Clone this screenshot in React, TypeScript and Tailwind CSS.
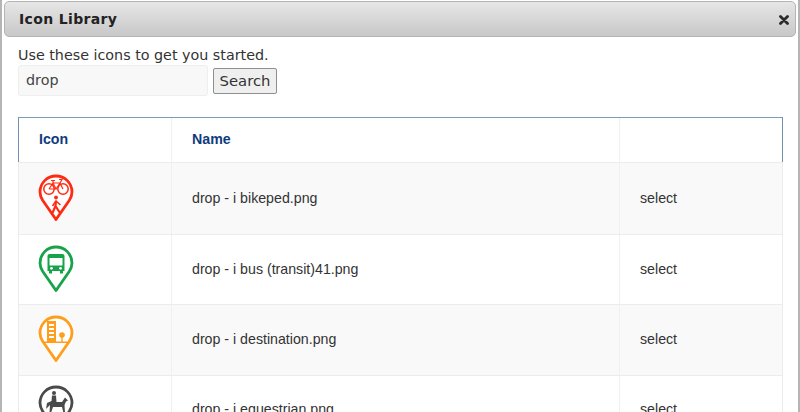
import { ReactNode } from 'react';

function Pin({ color, children }: { color: string; children: ReactNode }) {
  return (
    <svg width="36" height="48" viewBox="0 0 36 48" fill="none" className="block">
      <path
        d="M18 45.5 L4.8 26.5 C3 23.6 2 21 2 18 C2 9 9.2 2 18 2 C26.8 2 34 9 34 18 C34 21 33 23.6 31.2 26.5 Z"
        stroke={color}
        strokeWidth="2.8"
        strokeLinejoin="round"
        fill="#fff"
      />
      {children}
    </svg>
  );
}

const bikeped = (
  <g stroke="#ff2a12" fill="none">
    <circle cx="11" cy="15" r="5.2" strokeWidth="1.5" />
    <circle cx="25" cy="15" r="5.2" strokeWidth="1.5" />
    <path d="M11 15 L15 9 H22 L25 15 M15 9 L18 15 H11 M18 15 L22 9 M13 6.5 H17 M15 6.5 L15 9 M21 5.5 H24 L22 9" strokeWidth="1.2" />
    <circle cx="18" cy="23.5" r="1.9" fill="#ff2a12" stroke="none" />
    <path d="M18 26.5 L17.5 32 L14.5 39 M17.5 32 L22 39" strokeWidth="2.2" />
    <path d="M18 27 L14.5 32 M18 27 L22.5 31" strokeWidth="1.5" />
  </g>
);

const bus = (
  <g fill="#16a34a">
    <path fillRule="evenodd" d="M9.5 11 Q9.5 9 11.5 9 H24.5 Q26.5 9 26.5 11 V26 H25 V28.5 H22 V26 H14 V28.5 H11 V26 H9.5 Z M11.5 13 V20.5 H24.5 V13 Z" />
    <circle cx="13.5" cy="23.3" r="1.4" fill="#fff" />
    <circle cx="22.5" cy="23.3" r="1.4" fill="#fff" />
  </g>
);

const destination = (
  <g fill="#ff9d1c">
    <path fillRule="evenodd" d="M9 6 H18 V27 H9 Z M11 9 V11 H16 V9 Z M11 13 V15 H16 V13 Z M11 17 V19 H16 V17 Z M11 21 V23 H16 V21 Z" />
    <circle cx="24" cy="20" r="2.8" />
    <rect x="23.3" y="21" width="1.4" height="6" />
    <rect x="4" y="26.5" width="28" height="1.5" />
  </g>
);

const equestrian = (
  <g fill="#4a4a4a">
    <circle cx="16" cy="8" r="2" />
    <path d="M14 10.5 H18 L18.5 17 H24 L27 12.5 L30 15.5 L28 16.5 L26.5 20 L27 28 H25.5 L24 22 H15 L13 28 H11.5 L12 20 L8 24 L9 18 L13.5 16 Z" />
  </g>
);

const rows = [
  { name: 'drop - i bikeped.png', color: '#ff2a12', art: bikeped, h: 'h-[72px]', alt: true },
  { name: 'drop - i bus (transit)41.png', color: '#16a34a', art: bus, h: 'h-[70px]', alt: false },
  { name: 'drop - i destination.png', color: '#ff9d1c', art: destination, h: 'h-[71px]', alt: true },
  { name: 'drop - i equestrian.png', color: '#4a4a4a', art: equestrian, h: 'h-[68px]', alt: false },
];

export default function App() {
  return (
    <div className="h-[412px] w-[800px] overflow-hidden bg-white border-l-2 border-r-2 border-[#b5b5b5] font-['DejaVu_Sans',sans-serif] text-[#333]">
      {/* Header */}
      <div className="mx-[2px] mt-px flex h-[36px] items-center justify-between rounded-[5px] border border-[#b4b4b4] bg-gradient-to-b from-[#e6e6e6] to-[#c8c8c8] pl-[14px] pr-[6px]">
        <h1 className="text-[14px] font-bold tracking-[0.35px] text-[#222]">Icon Library</h1>
        <svg width="10" height="10" viewBox="0 0 10 10" className="mt-px">
          <path d="M1.5 1.5 L8.5 8.5 M8.5 1.5 L1.5 8.5" stroke="#2a2a2a" strokeWidth="2.8" strokeLinecap="round" />
        </svg>
      </div>

      {/* Body */}
      <div className="pl-4 pr-[15px]">
        <p className="mt-[8px] h-[20px] text-[14.3px] leading-[20px] text-[#333]">Use these icons to get you started.</p>
        <div className="flex items-center gap-[5px]">
          <div className="flex h-[31px] w-[190px] items-center rounded-[3px] border border-[#eeeeee] bg-[#f8f8f8] pl-[7px] pt-px text-[14.3px] text-[#444]">drop</div>
          <button className="h-[26px] w-[64px] rounded-[2px] border border-[#8f8f8f] bg-[#efefef] pt-px text-[14.8px] text-[#333]">Search</button>
        </div>

        {/* Table */}
        <div className="mt-[21px] font-['Liberation_Sans',sans-serif] text-[14.2px]">
          <div className="flex h-[45px] items-center border-x-[1.5px] border-t-[1.5px] border-x-[#6f8fb5] border-t-[#7f9aba] font-bold text-[#0f3c7d]">
            <div className="flex h-full w-[153px] items-center border-r border-[#f0f0f0] pl-[20px]">Icon</div>
            <div className="flex h-full w-[448px] items-center border-r border-[#f0f0f0] pl-[20px]">Name</div>
            <div className="flex-1" />
          </div>
          {rows.map(r => (
            <div key={r.name} className={`flex items-center border-x border-t border-[#ececec] ${r.h} ${r.alt ? 'bg-[#f9f9f9]' : 'bg-white'}`}>
              <div className="flex h-full w-[153px] items-center border-r border-[#f0f0f0] pl-[19px] pb-[2px]">
                <Pin color={r.color}>{r.art}</Pin>
              </div>
              <div className="flex h-full w-[448px] items-center border-r border-[#f0f0f0] pl-[20px] text-[#333]">{r.name}</div>
              <div className="flex-1 pl-[20px] text-[#333]">select</div>
            </div>
          ))}
        </div>
      </div>
    </div>
  );
}
